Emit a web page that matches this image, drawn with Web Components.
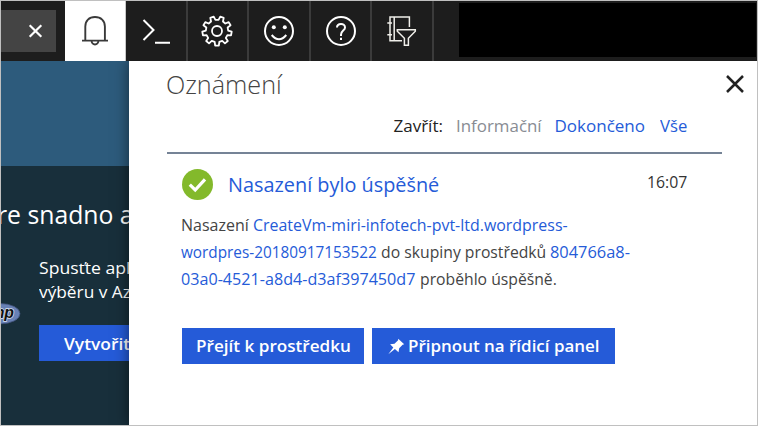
<!DOCTYPE html>
<html lang="cs">
<head>
<meta charset="utf-8">
<title>Oznámení</title>
<style>
html,body{margin:0;height:100%;overflow:hidden}
body{font-family:"Open Sans","Noto Sans",sans-serif;color:#444}
</style>
</head>
<body>
<portal-page></portal-page>
<script>
function define(name, html, ready) {
  const t = document.createElement('template');
  t.innerHTML = html;
  customElements.define(name, class extends HTMLElement {
    constructor() {
      super();
      this.attachShadow({mode: 'open'}).append(t.content.cloneNode(true));
    }
    connectedCallback() { if (ready) ready.call(this, this.shadowRoot); }
  });
}

/* One line of text condensed or widened to the width in its "w" attribute. */
define('fit-text', `
<style>
:host{display:block;flex:none;white-space:nowrap}
span{display:inline-block;white-space:pre;transform-origin:0 50%;vertical-align:top}
</style><span><slot></slot></span>`, function (root) {
  const w = +this.getAttribute('w');
  const s = root.querySelector('span');
  this.style.width = w + 'px';
  s.style.transform = 'scaleX(' + w / s.offsetWidth + ')';
});

define('bar-item', `
<style>
:host{display:flex;flex:none;box-sizing:border-box;width:61.6px;height:60px;align-items:center;justify-content:center;border-right:2px solid #3b3b3b;color:#fff}
:host([active]){width:61px;background:#fff;color:#3a3a3a;border-right:1px solid #c8c8c8}
</style><slot></slot>`);

define('top-bar', `
<style>
:host{display:flex;height:60px;background:#1d1d1d}
.search{width:55px;height:42px;margin:9px 9px 0 0;background:#444;display:flex;align-items:center;justify-content:flex-end;flex:none}
.search svg{margin-right:13px}
.account{flex:1;background:#000;margin:2px 1px 4px 25px}
svg{display:block;fill:none;stroke:currentColor}
</style>
<div class="search"><svg width="15" height="15" viewBox="0 0 15 15" style="color:#fff;stroke-width:2.2"><path d="M1.7 1.2 13.3 12.8M13.3 1.2 1.7 12.8"/></svg></div>
<bar-item active><svg width="28" height="32" viewBox="0 0 28 32" stroke-width="1.9"><path d="M1 25.6H27M4.3 25.6V11.5C4.3 5.8 8.1 2 14 2S23.9 5.8 23.9 11.5V25.6M10.6 25.8A3.4 3.7 0 0 0 17.4 25.8"/></svg></bar-item>
<bar-item><svg width="30" height="28" viewBox="0 0 30 28" stroke-width="2"><path d="M2.5 3 12.5 13 2.5 23M14 25.8H29"/></svg></bar-item>
<bar-item id="gear"><svg width="32" height="32" viewBox="0 0 32 32" stroke-width="1.8" stroke-linejoin="round"><path/><circle cx="16" cy="16" r="5"/></svg></bar-item>
<bar-item><svg width="32" height="32" viewBox="0 0 32 32" stroke-width="2"><circle cx="16" cy="16" r="14"/><path d="M8.7 20Q16 28.6 23.3 20"/><g fill="currentColor" stroke="none"><circle cx="10.8" cy="12.3" r="2"/><circle cx="21.8" cy="12.3" r="2"/></g></svg></bar-item>
<bar-item><svg width="32" height="32" viewBox="0 0 32 32" stroke-width="2"><circle cx="16" cy="16" r="14"/><path d="M12 12.5C12.1 7.8 20 7.7 20 12.4 20 15.7 16 15.6 16 19.7V21M16 22.7V25"/></svg></bar-item>
<bar-item><svg width="32" height="32" viewBox="0 0 32 32" stroke-width="1.5" style="color:#f0efea"><path d="M23.4 12V2H4V25.8H16M8.2 2V25.8M1.3 8H6M1.3 19.8H6"/><path d="M11.3 14.8H29.3V16.2L22.4 23.2V30.3H18.4V23.2L11.3 16.2Z" fill="#1d1d1d"/></svg></bar-item>
<div class="account"></div>`, function (root) {
  const teeth = 9, p = [];
  for (let i = 0; i < teeth; i++) {
    for (const [f, r] of [[-.30, 11.2], [-.18, 14.7], [.18, 14.7], [.30, 11.2]]) {
      const a = (i + .5 + f) / teeth * Math.PI * 2 - Math.PI / 2;
      p.push((16 + r * Math.cos(a)).toFixed(2) + ' ' + (16 + r * Math.sin(a)).toFixed(2));
    }
  }
  root.querySelector('#gear path').setAttribute('d', 'M' + p.join('L') + 'Z');
});

define('action-button', `
<style>
:host{display:flex;flex:none;box-sizing:border-box;height:36px;align-items:center;background:#255bd8;color:#fff;font-weight:600;font-size:17px;line-height:24px}
</style><slot></slot>`);

define('page-backdrop', `
<style>
:host{display:block;position:relative;overflow:hidden;background:#182f3b;color:#fff;font-size:17px;line-height:24px}
.hero{height:105px;background:#2d5b7c;margin-bottom:31px}
.title{font-size:25.3px;line-height:34px;height:34px;margin:0 0 25px -4px}
.copy{margin-left:38px;height:48px}
action-button{margin:21px 0 0 38px;padding:1px 0 0 25px}
.php{position:absolute;left:-20px;top:242px;display:block}
</style>
<div class="hero"></div>
<fit-text class="title" w="137">re snadno a</fit-text>
<div class="copy"><fit-text w="91">Spusťte apl</fit-text><fit-text w="91.5">výběru v Az</fit-text></div>
<action-button><fit-text w="66.5">Vytvořit</fit-text></action-button>
<svg class="php" width="40" height="22" viewBox="0 0 40 22"><ellipse cx="19" cy="10.7" rx="20" ry="10.2" fill="#6881b6" stroke="#41527a" stroke-width=".8"/><text x="4" y="14.5" textLength="29" lengthAdjust="spacingAndGlyphs" font-family="Liberation Sans, sans-serif" font-size="16" font-weight="700" font-style="italic" fill="#111" stroke="#dfe5f2" stroke-width="1.4" paint-order="stroke">php</text></svg>`);

define('notice-card', `
<style>
:host{display:block;padding:16px 0 0 15px;font-size:17px}
.head{display:flex;align-items:flex-start;height:31px}
.head svg{margin-right:15px;flex:none}
.t{font-size:20px;line-height:31px;color:#255bd8}
.time{line-height:24px;margin:1px 0 0 auto;padding-right:35px;color:#333}
.body{margin-top:11px;line-height:27px}
.body div{display:flex;height:27px;margin-left:-1px}
.a{color:#255bd8}
.actions{display:flex;gap:8px;margin-top:36px}
.go{width:182px;padding-left:14px}
.pin{width:243px;padding-left:16px}
.pin svg{margin-right:3px}
</style>
<div class="head">
<svg width="31" height="31" viewBox="0 0 31 31"><circle cx="15.5" cy="15.5" r="15.5" fill="#83b92b"/><path d="M7.8 15.7 13.2 21 23 10.3" fill="none" stroke="#fff" stroke-width="3.2"/></svg>
<fit-text class="t" w="211.5">Nasazení bylo úspěšné</fit-text>
<fit-text class="time" w="40">16:07</fit-text>
</div>
<div class="body">
<div><fit-text w="71.5">Nasazení </fit-text><fit-text class="a" w="315">CreateVm-miri-infotech-pvt-ltd.wordpress-</fit-text></div>
<div><fit-text class="a" w="195.5">wordpres-20180917153522</fit-text><fit-text w="173">&nbsp;do skupiny prostředků&nbsp;</fit-text><fit-text class="a" w="80">804766a8-</fit-text></div>
<div><fit-text class="a" w="234.5">03a0-4521-a8d4-d3af397450d7</fit-text><fit-text w="140.5">&nbsp;proběhlo úspěšně.</fit-text></div>
</div>
<div class="actions">
<action-button class="go"><fit-text w="155">Přejít k prostředku</fit-text></action-button>
<action-button class="pin"><svg width="17" height="17" viewBox="0 0 17 17" fill="#fff"><path d="M10.2.7 16.2 6.2 14.6 6.7 11.2 10.2 10.5 14.2 6.9 10.9.3 16.3 5.3 9.4 2.1 6.3 6.5 5.7 10.1 2.3Z"/></svg><fit-text w="191.5">Připnout na řídicí panel</fit-text></action-button>
</div>`);

define('notice-panel', `
<style>
:host{display:block;position:relative;background:#fff;box-shadow:0 0 14px rgba(0,0,0,.55);padding:6px 35px 0 38px}
.top{display:flex;justify-content:space-between;height:47px}
.top svg{margin:8px -22px 0 0}
h1{margin:0 0 0 -1px;font-weight:300;font-size:25.3px;line-height:34px}
.filter{display:flex;justify-content:flex-end;height:38px;padding-right:34.5px;font-size:17px;line-height:24px;color:#255bd8;border-bottom:2px solid #758396}
.l{color:#222;margin-right:13.5px}.off{color:#888c93;margin-right:13px}.d{margin-right:14.5px}
notice-card{margin-top:-1px}
</style>
<div class="top"><h1><fit-text w="115.5">Oznámení</fit-text></h1>
<svg width="18" height="18" viewBox="0 0 18 18"><path d="M1 1 17 17M17 1 1 17" stroke="#222" stroke-width="2.5"/></svg></div>
<div class="filter"><fit-text class="l" w="49">Zavřít:</fit-text><fit-text class="off" w="85.5">Informační</fit-text><fit-text class="d" w="91">Dokončeno</fit-text><fit-text w="27.5">Vše</fit-text></div>
<notice-card></notice-card>`);

define('portal-page', `
<style>
:host{display:block;box-sizing:border-box;width:758px;height:426px;border:1px solid #c0c0c0;overflow:hidden;background:#fff}
.main{display:grid;grid-template-columns:128px 1fr;height:364px;overflow:hidden}
</style>
<top-bar></top-bar>
<div class="main"><page-backdrop></page-backdrop><notice-panel></notice-panel></div>`);
</script>
</body>
</html>
